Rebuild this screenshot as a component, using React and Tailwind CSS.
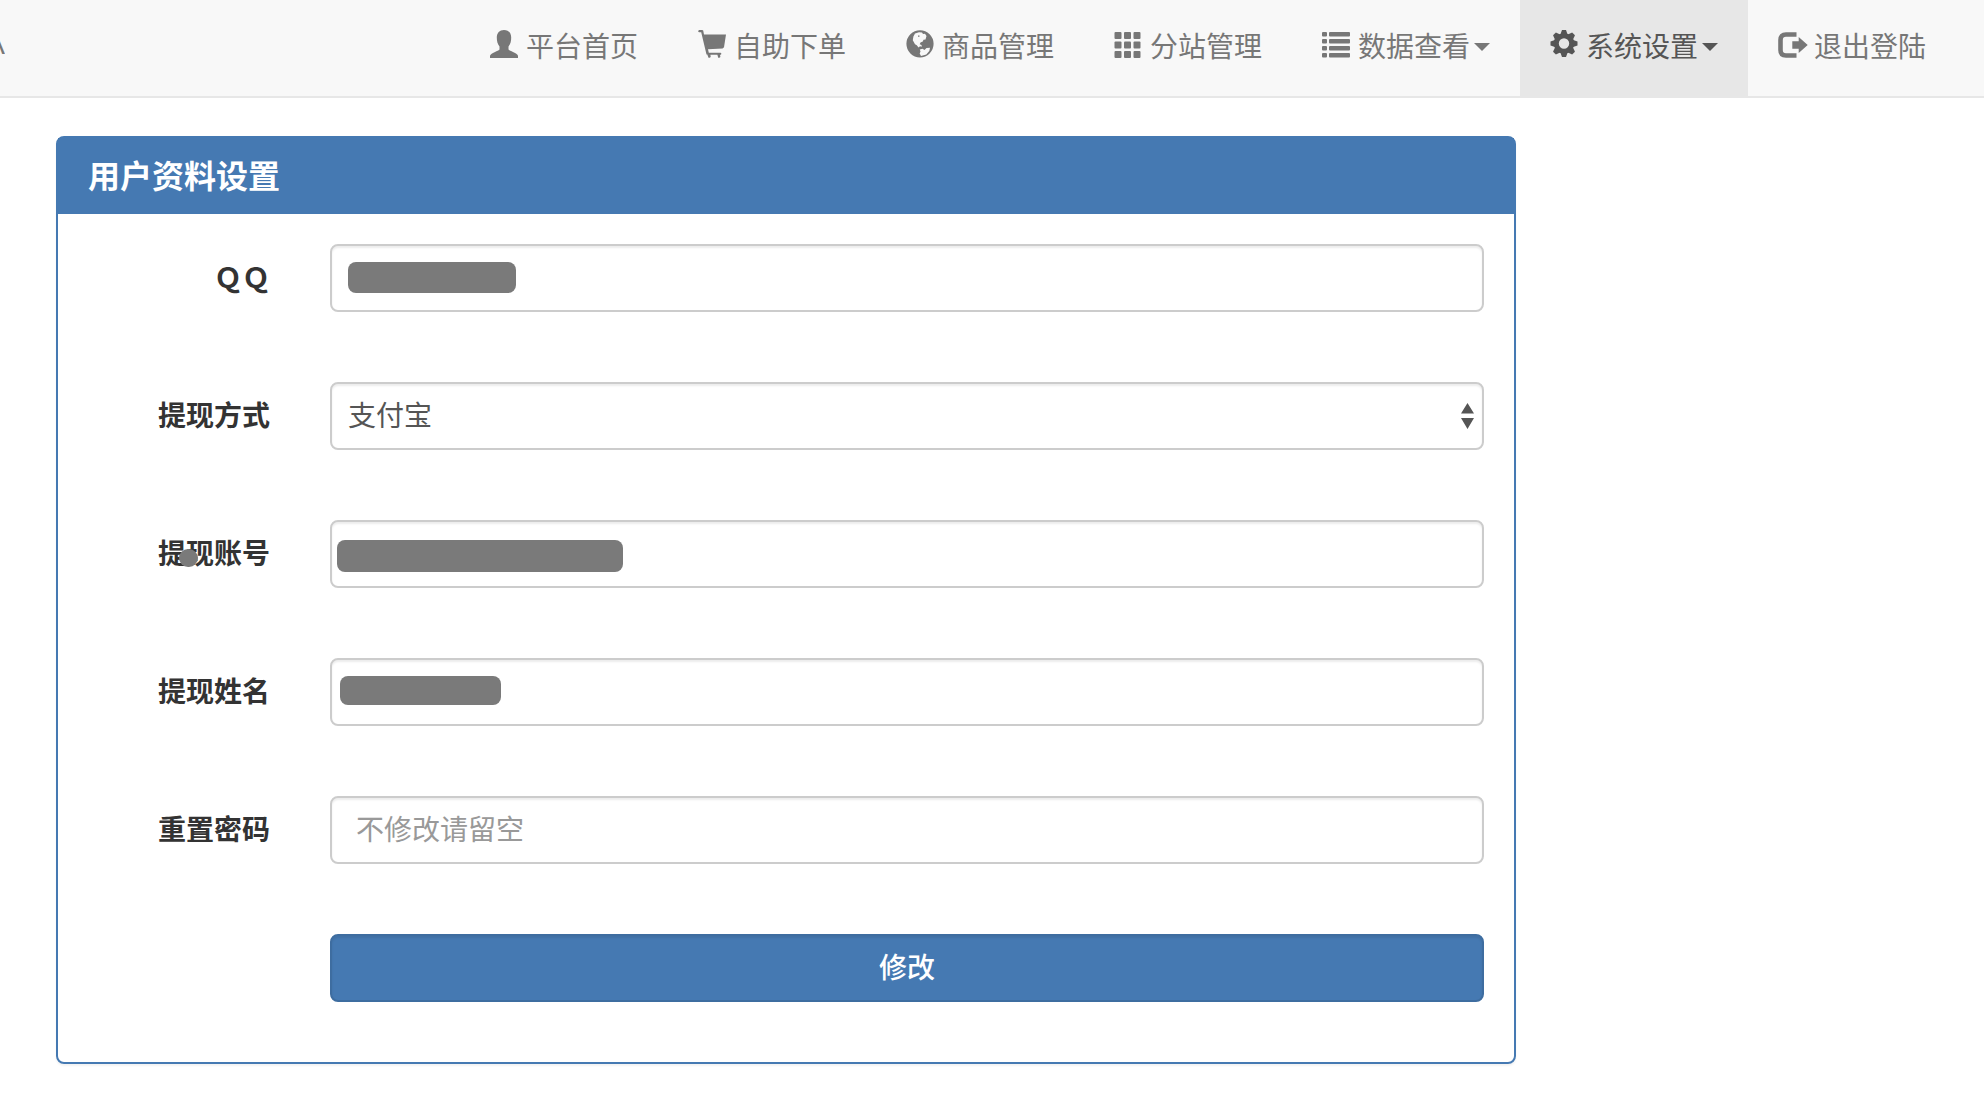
import React from "react";

const GEAR_TEETH = [0, 45, 90, 135, 180, 225, 270, 315];

const ICONS = {
  user: (
    <path d="M14 0c4.500 0 7.200 3 7.200 7.500 0 3.500-.7 6.500-2.700 9v3c1 1 2.500 1.500 4.500 2.500 3 1.500 5 2.500 5 4V28H0v-2c0-1.500 2-2.500 5-4 2-1 3.500-1.500 4.500-2.500v-3c-2-2.500-2.700-5.500-2.700-9C6.800 3 9.500 0 14 0z" />
  ),
  cart: (
    <path d="M1 0h3.200l1 .6L6 4.400h22L26 17.200l-1.400 1.300-14.600.8.8 3.500h11.800l.8.700-.4 1.300h-1l.4 2.200-1 .8h-1.200l-.8-3h-7l.3 2.200-1 .8h-1.200l-1.200-3.200h-.8L3.200 2.300H1L0 1.200z" />
  ),
  globe: (
    <path
      fillRule="evenodd"
      d="M14 .2a13.600 13.600 0 1 0 0 27.200 13.600 13.600 0 0 0 0-27.200zM9 3.500l4-1.300 3 .3 1 1.500 2-.3 1.500 2.300-1 3.500-2 .3-.7 1.700-2.300 1-.8 1.800 1.800.7.300 1.800-1.800-.5-1.500 1.200-1.700-2.200-1.800-1-2.200-4 .6-3.800zM12 5.500v1.300h1.500V5.500zM13.800 19.500l2.700-.7 2 1.200 2-2 3.500-.2-.7 3.200-3 3.500-5.300 1.500-1.300-2.500.8-2z"
    />
  ),
  grid: [2, 11.500, 21].map((y) =>
    [0.500, 10, 19.500].map((x) => <rect key={`${x}-${y}`} x={x} y={y} width="7" height="7" rx="1" />)
  ),
  list: [2, 9, 16, 23].map((y) => (
    <g key={y}>
      <rect x="0" y={y} width="5" height="4.500" rx="1" />
      <rect x="7" y={y} width="21" height="4.500" rx="1" />
    </g>
  )),
  gear: (
    <>
      <circle cx="14" cy="13.500" r="7.700" fill="none" stroke="currentColor" strokeWidth="5" />
      {GEAR_TEETH.map((angle) => (
        <path key={angle} d="M12 0h4l1.800 5h-7.600z" transform={`rotate(${angle} 14 13.500)`} />
      ))}
    </>
  ),
  exit: (
    <>
      <path d="M18.500 4.500H8q-5.500 0-5.500 5.500v10q0 5.500 5.500 5.500h10.500" fill="none" stroke="currentColor" strokeWidth="4.600" />
      <path d="M20.700 7l9 8-9 8v-4.200h-6.400v-7.500h6.400z" />
    </>
  ),
};

const NAV = [
  { text: "平台首页", icon: "user" },
  { text: "自助下单", icon: "cart" },
  { text: "商品管理", icon: "globe" },
  { text: "分站管理", icon: "grid" },
  { text: "数据查看", icon: "list", caret: true },
  { text: "系统设置", icon: "gear", caret: true, active: true },
  { text: "退出登陆", icon: "exit" },
];

function NavItem({ text, icon, caret, active }) {
  return (
    <li>
      <a
        href="#"
        className={`flex h-24 items-center px-[30px] pb-1.5 ${active ? "bg-[#e7e7e7] text-[#555]" : "text-[#777]"}`}
      >
        <svg viewBox="0 0 28 28" className="mr-2 mb-0.5 size-7 overflow-visible fill-current" aria-hidden="true">
          {ICONS[icon]}
        </svg>
        {text}
        {caret && <span className="mt-1 ml-1 border-x-8 border-t-8 border-x-transparent border-t-current" />}
      </a>
    </li>
  );
}

const FIELD =
  "block h-[68px] w-full appearance-none rounded-lg border-2 border-[#ccc] bg-white px-4 pb-1 text-[#555] shadow-[inset_0_2px_2px_rgba(0,0,0,0.075)] outline-none placeholder:text-[#999]";

function Row({ id, label, mark, children }) {
  return (
    <div className="grid grid-cols-[242px_1fr] items-center">
      <label htmlFor={id} className="relative pr-[30px] pb-1 text-right font-bold text-[#333]">
        {label}
        {mark}
      </label>
      <div className="relative px-[30px]">{children}</div>
    </div>
  );
}

function Mask({ className }) {
  return <span className={`absolute bg-[#7a7a7a] ${className}`} />;
}

export default function App() {
  return (
    <div className="min-h-screen bg-white font-['Noto_Sans_CJK_SC',sans-serif] text-[28px] leading-10">
      <nav className="flex items-start justify-between border-b-2 border-[#e7e7e7] bg-[#f8f8f8]">
        <a
          href="#"
          className="flex h-24 w-[5px] items-center justify-end overflow-hidden pb-1.5 font-['Liberation_Sans',sans-serif] text-[#777]"
        >
          A
        </a>
        <ul className="flex pr-7">
          {NAV.map((item) => (
            <NavItem key={item.text} {...item} />
          ))}
        </ul>
      </nav>
      <main className="px-14 pt-[38px] pb-14">
        <section className="max-w-[1460px] rounded-lg border-2 border-[#4579b2] shadow-[0_2px_2px_rgba(0,0,0,0.05)]">
          <h3 className="bg-[#4579b2] px-[30px] pt-4 pb-5 text-[32px] font-bold text-white">用户资料设置</h3>
          <form className="flex flex-col gap-[70px] pt-[30px] pb-[60px]" onSubmit={(e) => e.preventDefault()}>
            <Row id="qq" label="ＱＱ">
              <input id="qq" type="text" className={FIELD} />
              <Mask className="top-[18px] left-12 h-[31px] w-[168px] rounded-lg" />
            </Row>
            <Row id="method" label="提现方式">
              <select id="method" className={FIELD}>
                <option>支付宝</option>
              </select>
              <svg
                viewBox="0 0 13 26"
                className="pointer-events-none absolute top-[21px] right-10 h-[26px] w-[13px] fill-[#555]"
                aria-hidden="true"
              >
                <path d="M6.500 0L13 10.500H0zM0 15h13L6.500 26z" />
              </svg>
            </Row>
            <Row
              id="account"
              label="提现账号"
              mark={<Mask className="top-[17px] left-[121px] h-[18px] w-[19px] rounded-full" />}
            >
              <input id="account" type="text" className={FIELD} />
              <Mask className="top-5 left-[37px] h-8 w-[286px] rounded-lg" />
            </Row>
            <Row id="name" label="提现姓名">
              <input id="name" type="text" className={FIELD} />
              <Mask className="top-[18px] left-10 h-[29px] w-[161px] rounded-lg" />
            </Row>
            <Row id="password" label="重置密码">
              <input id="password" type="password" placeholder="不修改请留空" className={`${FIELD} pl-6`} />
            </Row>
            <div className="pr-[30px] pl-[272px]">
              <button
                type="submit"
                className="block h-[68px] w-full rounded-lg border-2 border-[#3e6da0] bg-[#4579b2] pb-1 font-medium text-white shadow-[inset_0_2px_2px_rgba(0,0,0,0.075)]"
              >
                修改
              </button>
            </div>
          </form>
        </section>
      </main>
    </div>
  );
}
